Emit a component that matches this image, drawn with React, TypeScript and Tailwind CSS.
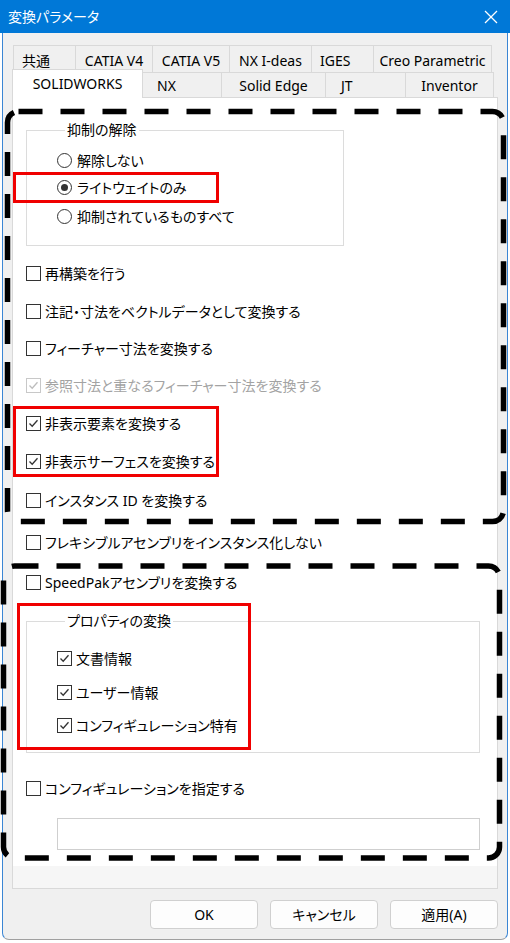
import React from 'react';

interface TabDef {
  label: string;
  w: string;
  pad?: string;
}

const row1: TabDef[] = [
  { label: '共通', w: 'w-[63px] border-l', pad: 'justify-start pl-[8px]' },
  { label: 'CATIA V4', w: 'w-[77px]' },
  { label: 'CATIA V5', w: 'w-[77px]' },
  { label: 'NX I-deas', w: 'w-[82px]' },
  { label: 'IGES', w: 'w-[62px]', pad: 'justify-start pl-[8px]' },
  { label: 'Creo Parametric', w: 'w-[118px]' },
];

const row2: TabDef[] = [
  { label: 'NX', w: 'w-[79px]', pad: 'justify-start pl-[14px]' },
  { label: 'Solid Edge', w: 'w-[104px]' },
  { label: 'JT', w: 'w-[80px]', pad: 'justify-start pl-[15px]' },
  { label: 'Inventor', w: 'w-[88px]' },
];

function Check({ color }: { color: string }): React.ReactElement {
  return (
    <svg width="13" height="13" viewBox="0 0 13 13" fill="none" stroke={color} strokeWidth="1.3">
      <polyline points="2.5,6.5 5.2,9.3 10.5,3.2" />
    </svg>
  );
}

function CheckRow({
  label,
  checked,
  disabled,
  mt,
}: {
  label: string;
  checked?: boolean;
  disabled?: boolean;
  mt: string;
}): React.ReactElement {
  return (
    <div className={`flex items-center h-[20px] ${mt}`}>
      <span
        className={`w-[15px] h-[15px] flex items-center justify-center bg-white border ${
          disabled ? 'border-[#c8c8c8]' : 'border-[#333333]'
        }`}
      >
        {checked && <Check color={disabled ? '#bdbdbd' : '#333333'} />}
      </span>
      <span className={`ml-[4px] whitespace-nowrap ${disabled ? 'text-[#a3a3a3]' : 'text-black'}`}>{label}</span>
    </div>
  );
}

function RadioRow({ label, checked, mt }: { label: string; checked?: boolean; mt: string }): React.ReactElement {
  return (
    <div className={`flex items-center h-[20px] ${mt}`}>
      <span className="w-[15px] h-[15px] rounded-full border border-[#333333] bg-white flex items-center justify-center">
        {checked && <span className="w-[7px] h-[7px] rounded-full bg-[#333333]" />}
      </span>
      <span className="ml-[5px] whitespace-nowrap">{label}</span>
    </div>
  );
}

export default function App(): React.ReactElement {
  return (
    <div className="relative w-[510px] h-[943px] bg-white text-[14px] text-black font-['Noto_Sans','Noto_Sans_CJK_JP',sans-serif] [font-feature-settings:'palt'] overflow-hidden">
      {/* Title bar */}
      <div className="h-[33px] bg-[#0078d7] flex items-center justify-between pl-[8px] pr-[12px] text-white">
        <span className="leading-none">変換パラメータ</span>
        <svg width="14" height="14" viewBox="0 0 14 14" stroke="white" strokeWidth="1.2">
          <line x1="1" y1="1" x2="13" y2="13" />
          <line x1="13" y1="1" x2="1" y2="13" />
        </svg>
      </div>

      {/* Window body */}
      <div className="mx-[2px] h-[907px] flex flex-col bg-[#f0f0f0] border-x border-x-[#3b86d4] border-b border-b-[#a0a0a0] rounded-b-[7px] pt-[12px] px-[9px]">
        {/* Tabs */}
        <div className="flex h-[27px] ml-[1px]">
          {row1.map((t) => (
            <div
              key={t.label}
              className={`${t.w} h-full flex items-center pt-[2px] border-t border-r border-[#d9d9d9] ${t.pad ?? 'justify-center'}`}
            >
              <span className="whitespace-nowrap">{t.label}</span>
            </div>
          ))}
        </div>
        <div className="flex h-[25px] items-end relative z-10">
          <div className="w-[131px] h-[29px] -mb-px bg-white border-t border-x border-[#d9d9d9] flex items-center justify-center pb-[2px]">
            SOLIDWORKS
          </div>
          {row2.map((t) => (
            <div
              key={t.label}
              className={`${t.w} h-[25px] flex items-center border-t border-r border-[#d9d9d9] ${t.pad ?? 'justify-center'}`}
            >
              <span className="whitespace-nowrap">{t.label}</span>
            </div>
          ))}
        </div>

        {/* Tab page */}
        <div className="h-[792px] flex flex-col border border-[#d9d9d9]">
          <div className="flex-1 bg-white pl-[13px] pr-[17px] flex flex-col">
            <fieldset className="mt-[22px] w-[318px] h-[126px] border border-[#dcdcdc] pl-[30px]">
              <legend className="ml-[8px] px-[2px] leading-[20px]">抑制の解除</legend>
              <RadioRow label="解除しない" mt="mt-[10px]" />
              <RadioRow label="ライトウェイトのみ" checked mt="mt-[7px]" />
              <RadioRow label="抑制されているものすべて" mt="mt-[9px]" />
            </fieldset>

            <CheckRow label="再構築を行う" mt="mt-[17px]" />
            <CheckRow label="注記・寸法をベクトルデータとして変換する" mt="mt-[18px]" />
            <CheckRow label="フィーチャー寸法を変換する" mt="mt-[17px]" />
            <CheckRow label="参照寸法と重なるフィーチャー寸法を変換する" checked disabled mt="mt-[17px]" />
            <CheckRow label="非表示要素を変換する" checked mt="mt-[18px]" />
            <CheckRow label="非表示サーフェスを変換する" checked mt="mt-[18px]" />
            <CheckRow label="インスタンス ID を変換する" mt="mt-[19px]" />
            <CheckRow label="フレキシブルアセンブリをインスタンス化しない" mt="mt-[22px]" />
            <CheckRow label="SpeedPakアセンブリを変換する" mt="mt-[20px]" />

            <fieldset className="mt-[19px] h-[142px] border border-[#dcdcdc] pl-[30px]">
              <legend className="ml-[8px] px-[2px] leading-[20px]">プロパティの変換</legend>
              <CheckRow label="文書情報" checked mt="mt-[17px]" />
              <CheckRow label="ユーザー情報" checked mt="mt-[14px]" />
              <CheckRow label="コンフィギュレーション特有" checked mt="mt-[13px]" />
            </fieldset>

            <CheckRow label="コンフィギュレーションを指定する" mt="mt-[25px]" />
            <div className="mt-[20px] ml-[31px] h-[32px] border border-[#cfcfcf] bg-white" />
          </div>
          <div className="h-[22px] bg-[#f6f6f6]" />
        </div>

        {/* Buttons */}
        <div className="mt-[11px] flex justify-end gap-[12px]">
          {['OK', 'キャンセル', '適用(A)'].map((b) => (
            <button
              key={b}
              className="w-[108px] h-[29px] rounded-[4px] border border-[#d0d0d0] bg-[#fdfdfd] flex items-center justify-center"
            >
              {b}
            </button>
          ))}
        </div>
      </div>

      {/* Annotation: dashed areas */}
      <svg className="absolute left-0 top-0 pointer-events-none" width="510" height="943">
        <rect x="7.5" y="111.5" width="496" height="410" rx="11" fill="none" stroke="black" strokeWidth="5.5" strokeDasharray="24 18" />
        <rect x="3.5" y="566" width="496" height="292" rx="11" fill="none" stroke="black" strokeWidth="5.5" strokeDasharray="24 18" />
      </svg>

      {/* Annotation: red highlights */}
      <div className="absolute left-[13px] top-[172px] w-[206px] h-[31px] border-[3px] border-[#f00000]" />
      <div className="absolute left-[13px] top-[406px] w-[206px] h-[71px] border-[3px] border-[#f00000]" />
      <div className="absolute left-[17px] top-[603px] w-[234px] h-[147px] border-[3px] border-[#f00000]" />
    </div>
  );
}
